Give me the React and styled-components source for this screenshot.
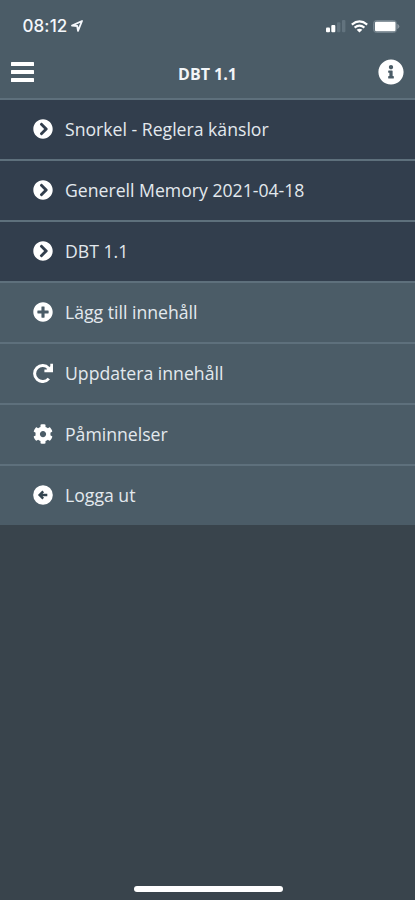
import React from "react";
import styled, { createGlobalStyle } from "styled-components";
import {
  FaChevronCircleRight,
  FaPlusCircle,
  FaCog,
  FaInfoCircle,
} from "react-icons/fa";

const RefreshIcon = ({ size }) => (
  <svg width={size} height={size} viewBox="0 0 20 20">
    <path d="M15.6 5.2A8 8 0 1 0 15.8 15.6" fill="none" stroke="currentColor" strokeWidth="3" />
    <path d="M17.3 0.8H20V9.2H11.4V6.6L13.6 6.4 17.3 3.2Z" fill="currentColor" />
  </svg>
);

const LogoutIcon = ({ size }) => (
  <svg width={size} height={size} viewBox="0 0 20 20">
    <circle cx="10" cy="10" r="9.8" fill="currentColor" />
    <path d="M14.3 10H7M10.2 6.4 6.6 10 10.2 13.6" fill="none" stroke="#344550" strokeWidth="2.4" />
  </svg>
);

const programs = ["Snorkel - Reglera känslor", "Generell Memory 2021-04-18", "DBT 1.1"];

const actions = [
  { label: "Lägg till innehåll", icon: FaPlusCircle },
  { label: "Uppdatera innehåll", icon: RefreshIcon },
  { label: "Påminnelser", icon: FaCog },
  { label: "Logga ut", icon: LogoutIcon },
];

const App = () => {
  return (
    <Screen>
      <GlobalStyle />
      <StatusBar>
        <Clock>
          08:12
          <svg width="12" height="12" viewBox="0 0 12 12">
            <path d="M1 5.6 11 1 7 10.8 6.2 6Z" fill="none" stroke="#f4f7fb" strokeWidth="1.8" strokeLinejoin="round" />
          </svg>
        </Clock>
        <Indicators>
          <svg width="20" height="14" viewBox="0 0 20 14">
            <rect x="0" y="8.5" width="4" height="4.7" rx="1" fill="#fff" />
            <rect x="5.3" y="6" width="4" height="7.2" rx="1" fill="#fff" />
            <rect x="11" y="3.3" width="3.4" height="9.9" rx="1" fill="#62737e" />
            <rect x="16" y="1" width="3.4" height="12.2" rx="1" fill="#62737e" />
          </svg>
          <svg width="17" height="13" viewBox="0 0 17 13">
            <g fill="none" stroke="#fff" strokeWidth="2.1">
              <path d="M0.8 4.6Q8.5-1.8 16.2 4.6" />
              <path d="M3.6 7.6Q8.5 3.5 13.4 7.6" />
            </g>
            <path d="M8.5 12.6 5.6 9.8Q8.5 7.7 11.4 9.8Z" fill="#fff" />
          </svg>
          <svg width="27" height="13" viewBox="0 0 27 13">
            <rect x="0.5" y="0.5" width="23" height="12" rx="3" fill="#65757f" stroke="#74838d" />
            <rect x="2" y="1.8" width="20.5" height="9.4" rx="1.2" fill="#fff" />
            <path d="M24.3 3.8Q28.5 6.5 24.3 9.2Z" fill="#87939c" />
          </svg>
        </Indicators>
      </StatusBar>
      <Header>
        <Bars>
          <span />
          <span />
          <span />
        </Bars>
        <Title>DBT 1.1</Title>
        <FaInfoCircle size={26} />
      </Header>
      <Menu>
        {programs.map((name) => (
          <MenuItem key={name} $dark>
            <FaChevronCircleRight size={20} />
            {name}
          </MenuItem>
        ))}
        {actions.map(({ label, icon: Icon }) => (
          <MenuItem key={label}>
            <Icon size={20} />
            {label}
          </MenuItem>
        ))}
      </Menu>
      <HomeIndicator />
    </Screen>
  );
};

const GlobalStyle = createGlobalStyle`
  * { box-sizing: border-box; }
  body { margin: 0; background: #39444c; }
`;

const Screen = styled.div`
  display: flex;
  flex-direction: column;
  width: 415px;
  height: 900px;
  overflow: hidden;
  background: #39444c;
  color: #fff;
  font-family: "Open Sans", "Noto Sans", sans-serif;
`;

const StatusBar = styled.div`
  display: flex;
  justify-content: space-between;
  align-items: center;
  height: 50px;
  padding: 2px 15px 0 22.5px;
  background: #4b5c67;
`;

const Clock = styled.div`
  display: flex;
  align-items: center;
  gap: 4px;
  color: #f4f7fb;
  font: 500 17px/20px Inter, sans-serif;
  letter-spacing: 0.1px;
`;

const Indicators = styled.div`
  display: flex;
  align-items: center;
  gap: 5px;
`;

const Header = styled.header`
  display: flex;
  justify-content: space-between;
  align-items: center;
  height: 48px;
  padding: 0 11px 4px;
  background: #4b5c67;
`;

const Bars = styled.div`
  display: flex;
  flex-direction: column;
  gap: 4px;
  width: 26px;
  span { width: 23px; height: 4px; background: #fff; border-radius: 0.5px; }
`;

const Title = styled.h1`
  margin: 0;
  padding: 3px 0 0;
  color: #f2f5f8;
  font-size: 16px;
  font-weight: 700;
`;

const Menu = styled.ul`
  margin: 0;
  padding: 0;
  list-style: none;
`;

const MenuItem = styled.li`
  display: flex;
  align-items: center;
  gap: 11.6px;
  height: 61px;
  padding: 0 33px 1px 33.4px;
  border-top: 2px solid #5e707c;
  background: ${props => (props.$dark ? "#323e4d" : "#4b5c67")};
  color: #e3e9ee;
  font-size: 17.65px;
  svg { color: #fff; }
`;

const HomeIndicator = styled.div`
  width: 149px;
  height: 6px;
  margin: auto auto 8px 134px;
  border-radius: 3px;
  background: #fff;
`;

export default App;
